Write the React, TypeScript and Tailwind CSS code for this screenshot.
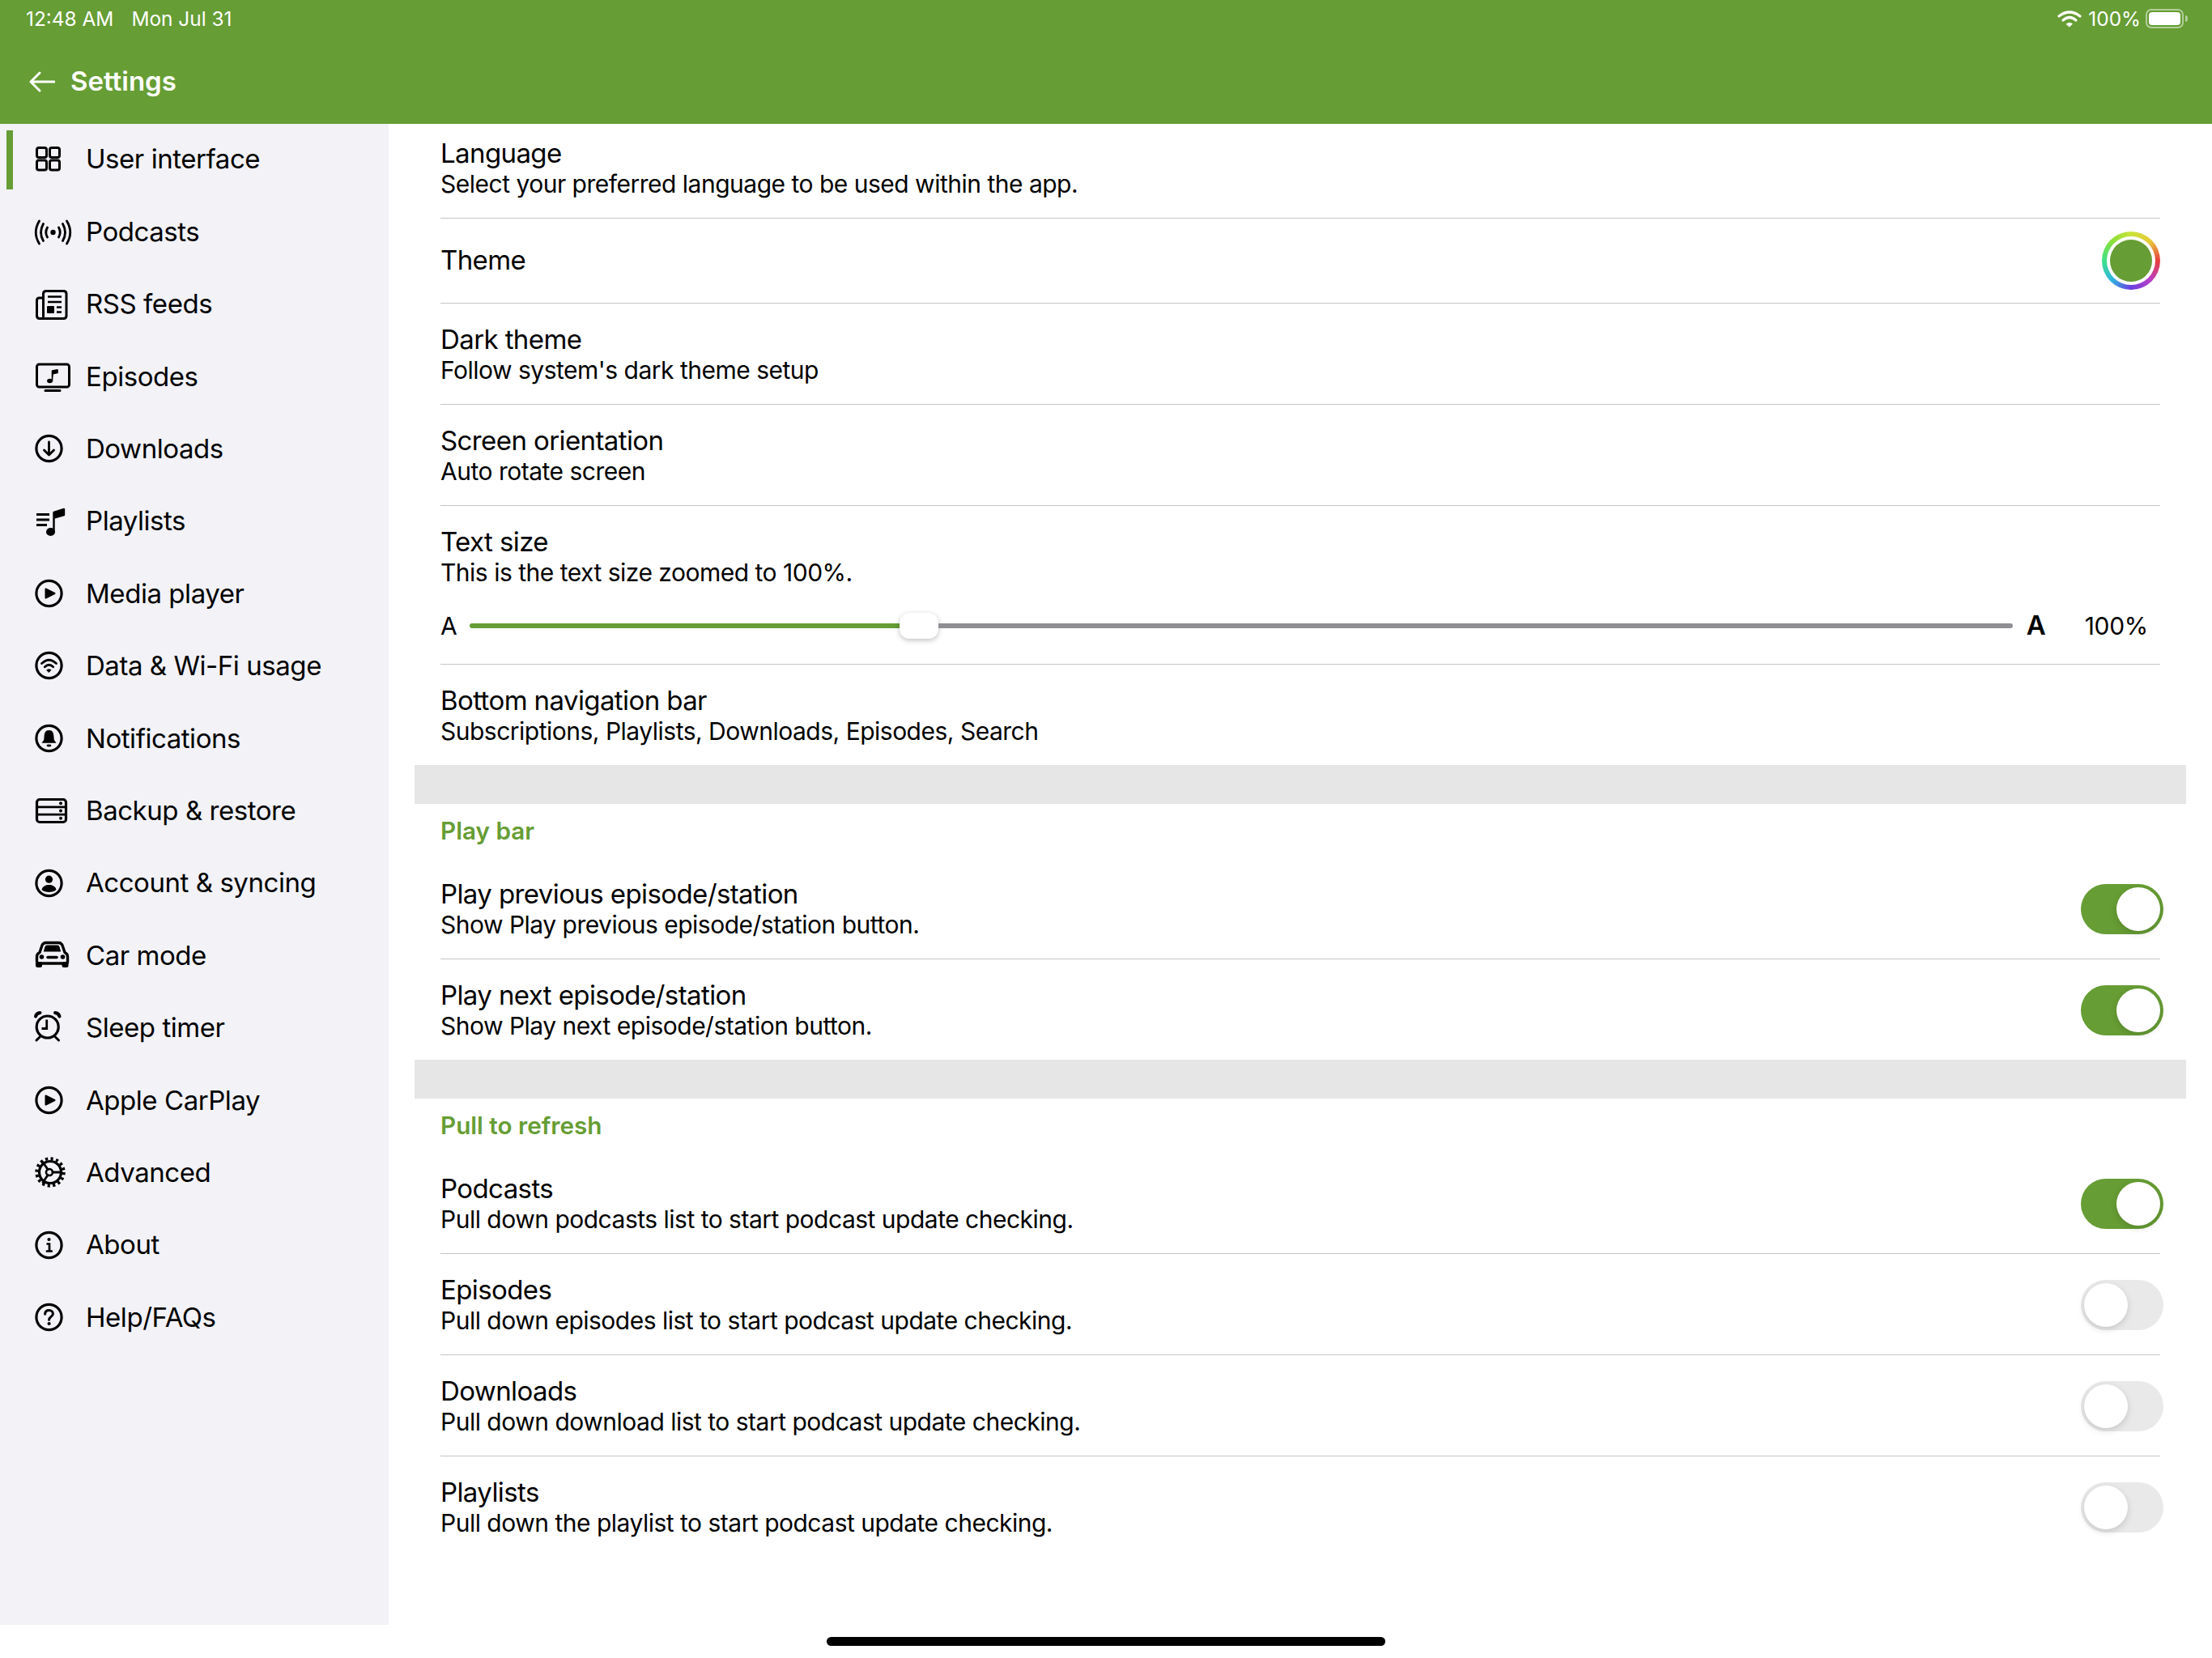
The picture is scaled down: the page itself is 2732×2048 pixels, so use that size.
import React from "react";

const Svg = ({ children }: { children: React.ReactNode }) => (
  <svg width="60" height="60" viewBox="0 0 60 60" fill="none" stroke="#000" strokeWidth="3" strokeLinecap="round" strokeLinejoin="round" className="shrink-0">
    {children}
  </svg>
);

const Ring = () => <circle cx="24.5" cy="29" r="15.6" strokeWidth="3.2" />;

const icons: Record<string, React.ReactNode> = {
  grid: (
    <>
      <rect x="9.5" y="14.5" width="12" height="12" rx="2.5" />
      <rect x="25.5" y="14.5" width="12" height="12" rx="2.5" />
      <rect x="9.5" y="30" width="12" height="12" rx="2.5" />
      <rect x="25.5" y="30" width="12" height="12" rx="2.5" />
    </>
  ),
  podcast: (
    <>
      <circle cx="29.5" cy="30" r="3.2" fill="#000" stroke="none" />
      <path d="M22.5 24 Q19 30 22.5 36 M36.5 24 Q40 30 36.5 36" strokeWidth="2.8" />
      <path d="M17.5 19.5 Q11.5 30 17.5 40.5 M41.5 19.5 Q47.5 30 41.5 40.5" strokeWidth="2.8" />
      <path d="M12.5 16 Q4 30 12.5 44 M46.5 16 Q55 30 46.5 44" strokeWidth="2.8" />
    </>
  ),
  news: (
    <>
      <path d="M17.5 45 V17 Q17.5 13.5 21 13.5 H42.5 Q46 13.5 46 17 V44 Q46 47.5 42.5 47.5 H13 Q9.5 47.5 9.5 44 V25 Q9.5 22 12.5 22 H17.5" />
      <path d="M23 20.5 H40 M23 27 H40 M34 33.5 H40 M34 39.5 H40" strokeWidth="2.4" strokeLinecap="butt" />
      <rect x="22" y="32" width="9" height="9" fill="#000" stroke="none" rx="1" />
    </>
  ),
  monitor: (
    <>
      <rect x="9.5" y="14" width="40" height="28" rx="3" />
      <path d="M20 46.5 H38" strokeWidth="3" />
      <path d="M28.5 34.5 V22 L35 20.8 V24.5 L30 25.5" fill="#000" strokeWidth="1.6" />
      <ellipse cx="25.5" cy="34.5" rx="3.4" ry="2.8" fill="#000" stroke="none" />
    </>
  ),
  download: (
    <>
      <Ring />
      <path d="M24.5 21 V37 M18.5 31 L24.5 37 L30.5 31" strokeWidth="2.8" />
    </>
  ),
  playlist: (
    <>
      <path d="M9 20.5 H25 M9 27 H25 M9 33.5 H22" strokeWidth="3" strokeLinecap="butt" />
      <path d="M30.5 41 V18 L43 14 V21 L31 24.5" fill="#000" strokeWidth="2.4" />
      <ellipse cx="26.5" cy="42" rx="5.5" ry="5" fill="#000" stroke="none" />
    </>
  ),
  play: (
    <>
      <Ring />
      <path d="M20.5 23.5 L31.5 29 L20.5 34.5 Z" fill="#000" strokeWidth="2" />
    </>
  ),
  wifi: (
    <>
      <Ring />
      <path d="M15.5 26.5 Q24.5 18 33.5 26.5" strokeWidth="2.8" />
      <path d="M19.3 30.8 Q24.5 25.8 29.7 30.8" strokeWidth="2.8" />
      <path d="M22 34.5 Q24.5 33 27 34.5 L24.5 37.2 Z" fill="#000" strokeWidth="1" />
    </>
  ),
  bell: (
    <>
      <Ring />
      <path d="M24.5 19 C20 19 18.8 22.5 18.6 26.5 L18.2 31 L15.5 34.8 H33.5 L30.8 31 L30.4 26.5 C30.2 22.5 29 19 24.5 19 Z" fill="#000" stroke="none" />
      <ellipse cx="24.5" cy="38" rx="3" ry="1.4" fill="#000" stroke="none" />
    </>
  ),
  server: (
    <>
      <rect x="9.5" y="15.5" width="36" height="28" rx="3.5" strokeWidth="3.2" />
      <path d="M9.5 24.8 H45.5 M9.5 34.2 H45.5" strokeWidth="2.8" />
      <circle cx="39" cy="20.2" r="2" fill="#000" stroke="none" />
      <circle cx="39" cy="29.5" r="2" fill="#000" stroke="none" />
      <circle cx="39" cy="38.8" r="2" fill="#000" stroke="none" />
    </>
  ),
  account: (
    <>
      <Ring />
      <circle cx="24.5" cy="24.2" r="4.6" fill="#000" stroke="none" />
      <path d="M15.5 37 C16.5 32.8 20.5 31 24.5 31 C28.5 31 32.5 32.8 33.5 37 C31 39.2 28 40 24.5 40 C21 40 18 39.2 15.5 37 Z" fill="#000" stroke="none" />
    </>
  ),
  car: (
    <>
      <path d="M9.5 37 V30.5 C9.5 28 11 26.5 13 25.5 L15.5 18 C16.3 15 18 13.5 21 13.5 H36 C39 13.5 40.7 15 41.5 18 L44 25.5 C46 26.5 47.5 28 47.5 30.5 V37 C47.5 38.5 47 39 45.5 39 H11.5 C10 39 9.5 38.5 9.5 37 Z" strokeWidth="3.4" />
      <path d="M17.8 24.5 L19.5 18.5 Q20 16.5 22 16.5 H35 Q37 16.5 37.5 18.5 L39.2 24.5 Z" fill="#000" stroke="none" />
      <circle cx="15.5" cy="31" r="2.8" fill="#000" stroke="none" />
      <circle cx="41.5" cy="31" r="2.8" fill="#000" stroke="none" />
      <path d="M23 31.5 H34" strokeWidth="3.6" />
      <rect x="8" y="37" width="8" height="7" rx="2.5" fill="#000" stroke="none" />
      <rect x="40.5" y="37" width="8" height="7" rx="2.5" fill="#000" stroke="none" />
    </>
  ),
  alarm: (
    <>
      <circle cx="22.7" cy="28.5" r="13.5" strokeWidth="3.2" />
      <path d="M21.7 19.5 V30.5 H15.5" strokeWidth="2.8" strokeLinecap="butt" strokeLinejoin="miter" />
      <path d="M8 15.5 Q9 11.5 13.5 11" strokeWidth="4" />
      <path d="M37.5 15.5 Q36.5 11.5 32 11" strokeWidth="4" />
      <path d="M13 41 L9 45 M32.5 41 L36.5 45" strokeWidth="3" />
    </>
  ),
  gear: (
    <>
      <circle cx="26" cy="29" r="13.5" strokeWidth="3.2" />
      <circle cx="26" cy="29" r="16.8" strokeWidth="3.8" strokeDasharray="3.2 3.4" strokeLinecap="butt" />
      <circle cx="25" cy="29" r="4" strokeWidth="2.6" />
      <path d="M29 29 H40 M23 25.6 L17 16.5 M23 32.4 L17 41.5" strokeWidth="2.8" />
    </>
  ),
  info: (
    <>
      <Ring />
      <circle cx="24.5" cy="22" r="2.1" fill="#000" stroke="none" />
      <path d="M21.5 27.5 H25 V36.5 M20.8 36.5 H28.8" strokeWidth="2.7" strokeLinecap="butt" strokeLinejoin="miter" />
    </>
  ),
  help: (
    <>
      <Ring />
      <path d="M19.6 25.2 C19.8 22.3 21.8 20.6 24.6 20.6 C27.5 20.6 29.4 22.4 29.4 24.9 C29.4 28.3 24.6 28.6 24.6 32.2" strokeWidth="3" />
      <circle cx="24.6" cy="37" r="2.1" fill="#000" stroke="none" />
    </>
  ),
};

const nav: [string, string][] = [
  ["grid", "User interface"],
  ["podcast", "Podcasts"],
  ["news", "RSS feeds"],
  ["monitor", "Episodes"],
  ["download", "Downloads"],
  ["playlist", "Playlists"],
  ["play", "Media player"],
  ["wifi", "Data & Wi-Fi usage"],
  ["bell", "Notifications"],
  ["server", "Backup & restore"],
  ["account", "Account & syncing"],
  ["car", "Car mode"],
  ["alarm", "Sleep timer"],
  ["play", "Apple CarPlay"],
  ["gear", "Advanced"],
  ["info", "About"],
  ["help", "Help/FAQs"],
];

const Toggle = ({ on }: { on?: boolean }) => (
  <div className={`flex h-[62px] w-[102px] shrink-0 items-center rounded-full p-[4px] -mr-[4px] ${on ? "justify-end bg-[#669d34]" : "justify-start bg-[#e9e9ea]"}`}>
    <div className="h-[54px] w-[54px] rounded-full bg-white shadow-[0_3px_8px_rgba(0,0,0,0.15)]" />
  </div>
);

const Row = ({ title, sub, toggle, first }: { title: string; sub: string; toggle?: "on" | "off"; first?: boolean }) => (
  <div className={`mx-[32px] flex items-center justify-between border-b border-[#c6c6c8] pb-[23px] ${first ? "pt-[17px]" : "pt-[25px]"}`}>
    <div>
      <div className="text-[33px] leading-[38px] tracking-[-0.6px] text-black">{title}</div>
      <div className="text-[30px] leading-[38px] tracking-[-0.5px] text-black">{sub}</div>
    </div>
    {toggle && <Toggle on={toggle === "on"} />}
  </div>
);

const LastRow = ({ title, sub, toggle }: { title: string; sub: string; toggle?: "on" | "off" }) => (
  <div className="mx-[32px] flex items-center justify-between pb-[23px] pt-[25px]">
    <div>
      <div className="text-[33px] leading-[38px] tracking-[-0.6px] text-black">{title}</div>
      <div className="text-[30px] leading-[38px] tracking-[-0.5px] text-black">{sub}</div>
    </div>
    {toggle && <Toggle on={toggle === "on"} />}
  </div>
);

const Band = () => <div className="h-[48px] bg-[#e6e6e6]" />;

const SectionHead = ({ children }: { children: React.ReactNode }) => (
  <div className="mx-[32px] flex h-[67px] items-center pb-[1px] text-[29.7px] font-semibold text-[#669d34]">{children}</div>
);

export default function App() {
  return (
    <div className="relative flex h-[2048px] w-[2732px] flex-col overflow-hidden bg-white [font-family:Inter,sans-serif]">
      <header className="h-[153px] shrink-0 bg-[#669d34] text-white">
        <div className="flex h-[46px] items-center justify-between pl-[32px] pr-[30px] text-[24.4px]">
          <div className="flex gap-[22px]">
            <span>12:48 AM</span>
            <span>Mon Jul 31</span>
          </div>
          <div className="flex items-center">
            <svg width="30" height="22" viewBox="0 0 30 22" fill="none" stroke="#fff" strokeWidth="3.2" strokeLinecap="round">
              <path d="M2 8 Q15 -2 28 8" />
              <path d="M7 13 Q15 6 23 13" />
              <path d="M11.5 17.5 Q15 15 18.5 17.5 L15 21 Z" fill="#fff" strokeWidth="1" />
            </svg>
            <span className="ml-[8px]">100%</span>
            <div className="ml-[6px] flex h-[24px] w-[47px] items-center rounded-[7px] border-2 border-white/50 p-[2px]">
              <div className="h-full w-full rounded-[4px] bg-white" />
            </div>
            <div className="ml-[2px] h-[8px] w-[3px] rounded-r-full bg-white/50" />
          </div>
        </div>
        <div className="mt-[9px] flex h-[92px] items-center pl-[36px]">
          <svg width="32" height="26" viewBox="0 0 32 26" fill="none" stroke="#fff" strokeWidth="3" strokeLinecap="round" strokeLinejoin="round">
            <path d="M31 13 H2 M13 2 L2 13 L13 24" />
          </svg>
          <span className="ml-[19px] text-[33px] font-semibold">Settings</span>
        </div>
      </header>

      <div className="flex min-h-0 flex-1 items-start">
        <nav className="h-[1854px] w-[480px] shrink-0 bg-[#f2f2f7]">
          {nav.map(([icon, label], i) => (
            <div key={label} className="relative flex h-[89.4px] items-center pl-[36px]">
              {i === 0 && <div className="absolute bottom-[8px] left-[8px] top-[8px] w-[8px] bg-[#669d34]" />}
              <Svg>{icons[icon]}</Svg>
              <span className="mb-[1px] ml-[10px] text-[33px] tracking-[-0.45px] text-black">{label}</span>
            </div>
          ))}
        </nav>

        <main className="min-w-0 flex-1 px-[32px]">
          <Row first title="Language" sub="Select your preferred language to be used within the app." />
          <div className="mx-[32px] flex h-[105px] items-center justify-between border-b border-[#c6c6c8] text-[33px] tracking-[-0.6px] text-black">
            <span>Theme</span>
            <div className="flex h-[72px] w-[72px] items-center justify-center rounded-full bg-[conic-gradient(#c9e23a,#e8c93a_45deg,#e8403f_90deg,#b93fc8_135deg,#6a3fe0_180deg,#2fb5e0_225deg,#3fe08a_270deg,#8ae03a_315deg,#c9e23a)]">
              <div className="flex h-[60px] w-[60px] items-center justify-center rounded-full bg-white">
                <div className="h-[52px] w-[52px] rounded-full bg-[#669d34]" />
              </div>
            </div>
          </div>
          <Row title="Dark theme" sub="Follow system's dark theme setup" />
          <Row title="Screen orientation" sub="Auto rotate screen" />
          <div className="mx-[32px] border-b border-[#c6c6c8] pb-[31px] pt-[25px]">
            <div className="text-[33px] leading-[38px] tracking-[-0.6px] text-black">Text size</div>
            <div className="text-[30px] leading-[38px] tracking-[-0.5px] text-black">This is the text size zoomed to 100%.</div>
            <div className="mt-[31px] flex h-[32px] items-center text-black">
              <span className="w-[36px] shrink-0 text-[30px]">A</span>
              <div className="h-[6px] w-[531px] shrink-0 rounded-l-full bg-[#669d34]" />
              <div className="h-[32px] w-[48px] shrink-0 rounded-[12px] bg-white shadow-[0_2px_6px_rgba(0,0,0,0.25)]" />
              <div className="h-[6px] flex-1 rounded-r-full bg-[#8e8e93]" />
              <span className="ml-[17px] w-[72px] shrink-0 text-[33px] font-semibold">A</span>
              <span className="mr-[15px] text-[30px] tracking-[-0.3px]">100%</span>
            </div>
          </div>
          <LastRow title="Bottom navigation bar" sub="Subscriptions, Playlists, Downloads, Episodes, Search" />
          <Band />
          <SectionHead>Play bar</SectionHead>
          <Row toggle="on" title="Play previous episode/station" sub="Show Play previous episode/station button." />
          <LastRow toggle="on" title="Play next episode/station" sub="Show Play next episode/station button." />
          <Band />
          <SectionHead>Pull to refresh</SectionHead>
          <Row toggle="on" title="Podcasts" sub="Pull down podcasts list to start podcast update checking." />
          <Row toggle="off" title="Episodes" sub="Pull down episodes list to start podcast update checking." />
          <Row toggle="off" title="Downloads" sub="Pull down download list to start podcast update checking." />
          <LastRow toggle="off" title="Playlists" sub="Pull down the playlist to start podcast update checking." />
        </main>
      </div>

      <div className="absolute bottom-[15px] left-[1021px] h-[11px] w-[690px] rounded-full bg-black" />
    </div>
  );
}
